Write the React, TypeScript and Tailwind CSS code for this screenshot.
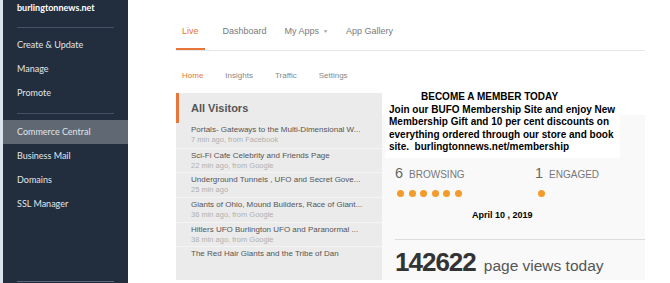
import React from "react";

const sideTop = ["Create & Update", "Manage", "Promote"];
const sideBottom = ["Business Mail", "Domains", "SSL Manager"];

const visitors = [
  ["Portals- Gateways to the Multi-Dimensional W...", "7 min ago, from Facebook"],
  ["Sci-Fi Cafe Celebrity and Friends Page", "22 min ago, from Google"],
  ["Underground Tunnels , UFO and Secret Gove...", "25 min ago"],
  ["Giants of Ohio, Mound Builders, Race of Giant...", "36 min ago, from Google"],
  ["Hitlers UFO Burlington UFO and Paranormal ...", "38 min ago, from Google"],
  ["The Red Hair Giants and the Tribe of Dan", ""],
];

const arial = { fontFamily: "'Liberation Sans', Arial, sans-serif" };

export default function App() {
  return (
    <div className="flex h-[283px] w-[670px] overflow-hidden bg-white" style={arial}>
      {/* Sidebar */}
      <aside
        className="flex w-[128px] shrink-0 flex-col border-l-[3px] border-[#dbe3ec] bg-[#222d3d] text-[9px] text-[#e1e5ea]"
        style={{ fontFamily: "Lato, 'Noto Sans', sans-serif" }}
      >
        <div className="mt-[1px] pl-[14px] text-[9px] font-bold leading-[14px] text-white">burlingtonnews.net</div>
        <div className="mx-[14px] mt-[12px] h-px bg-[#465165]" />
        <div className="mt-[5px]">
          {sideTop.map((s) => (
            <div key={s} className="flex h-[24px] items-center pl-[14px]">{s}</div>
          ))}
        </div>
        <div className="mx-[14px] mt-[8px] h-px bg-[#465165]" />
        <div className="mt-[6px] flex h-[24px] items-center bg-[#5f6873] pl-[14px]">Commerce Central</div>
        {sideBottom.map((s) => (
          <div key={s} className="flex h-[24px] items-center pl-[14px]">{s}</div>
        ))}
        <div className="mx-[14px] mt-auto mb-[1px] h-px bg-[#5b6679]" />
      </aside>

      {/* Main */}
      <main className="flex min-h-0 flex-1 flex-col pl-[48px] pr-[25px]">
        <nav className="flex h-[51px] shrink-0 items-end gap-[18px] border-b border-[#e7e7e7] text-[9px] leading-[14px] text-[#7a7a7a]">
          <span className="border-b-2 border-[#e8763a] px-[6px] pb-[10px] text-[#e8763a]">Live</span>
          <span className="pb-[12px]">Dashboard</span>
          <span className="flex items-center gap-[4px] pb-[12px]">
            My Apps <span className="text-[5px] text-[#999]">▼</span>
          </span>
          <span className="pb-[12px]">App Gallery</span>
        </nav>

        <div className="mt-[19px] flex shrink-0 gap-[22px] pl-[6px] text-[8px] leading-[12px] text-[#888]">
          <span className="text-[#e8763a]">Home</span>
          <span>Insights</span>
          <span>Traffic</span>
          <span>Settings</span>
        </div>

        <div className="mt-[11px] flex shrink-0">
          {/* All visitors */}
          <section className="w-[206px] shrink-0 bg-[#ebebeb]">
            <div className="flex h-[30px] items-center border-l-[3px] border-[#e8763a] pl-[12px] text-[11px] font-bold text-[#555]">
              All Visitors
            </div>
            {visitors.map(([t, s], i) => (
              <div key={t} className={`h-[24.7px] pl-[15px] pt-[2px] ${i ? "border-t border-[#f4f4f4]" : ""}`}>
                <div className="whitespace-nowrap text-[8px] leading-[10px] text-[#555]">{t}</div>
                <div className="whitespace-nowrap text-[7.5px] leading-[9px] text-[#b0b0b0]">{s}</div>
              </div>
            ))}
          </section>

          {/* Stats */}
          <section className="relative mt-[22px] flex-1 bg-[#f9f9f9] pl-[13px]">
            <div className="absolute left-[3px] top-[-25px] h-[68px] w-[235px] whitespace-nowrap bg-white pt-[1px] text-[10px] font-bold leading-[12.5px] text-black">
              <div className="pl-[36px]">BECOME A MEMBER TODAY</div>
              <div className="pl-[4px]">
                Join our BUFO Membership Site and enjoy New
                <br />
                Membership Gift and 10 per cent discounts on
                <br />
                everything ordered through our store and book
                <br />
                site.&nbsp; burlingtonnews.net/membership
              </div>
            </div>

            <div className="mt-[49px] grid grid-cols-[140px_1fr] text-[#777]">
              <div className="flex items-baseline gap-[6px] leading-[18px]">
                <span className="text-[14.5px] text-[#666]">6</span>
                <span className="text-[10px]">BROWSING</span>
              </div>
              <div className="flex items-baseline gap-[6px] leading-[18px]">
                <span className="text-[14.5px] text-[#666]">1</span>
                <span className="text-[10px]">ENGAGED</span>
              </div>
              <div className="mt-[6px] flex gap-[4.6px] pl-[2px]">
                {[0, 1, 2, 3, 4, 5].map((d) => (
                  <span key={d} className="h-[7px] w-[7px] rounded-full bg-[#f39c2c]" />
                ))}
              </div>
              <div className="mt-[6px] flex pl-[3px]">
                <span className="h-[7px] w-[7px] rounded-full bg-[#f39c2c]" />
              </div>
            </div>

            <div className="mt-[12px] pl-[77px] text-[9px] font-bold leading-[12px] text-black">April 10 , 2019</div>
            <div className="mt-[18px] h-px bg-[#dcdcdc]" />
            <div className="mt-[8px] flex items-baseline gap-[8px] leading-[28px]">
              <span className="text-[26px] font-bold tracking-[-1px] text-[#333]">142622</span>
              <span className="text-[15.5px] text-[#555]">page views today</span>
            </div>
          </section>
        </div>
      </main>
    </div>
  );
}
